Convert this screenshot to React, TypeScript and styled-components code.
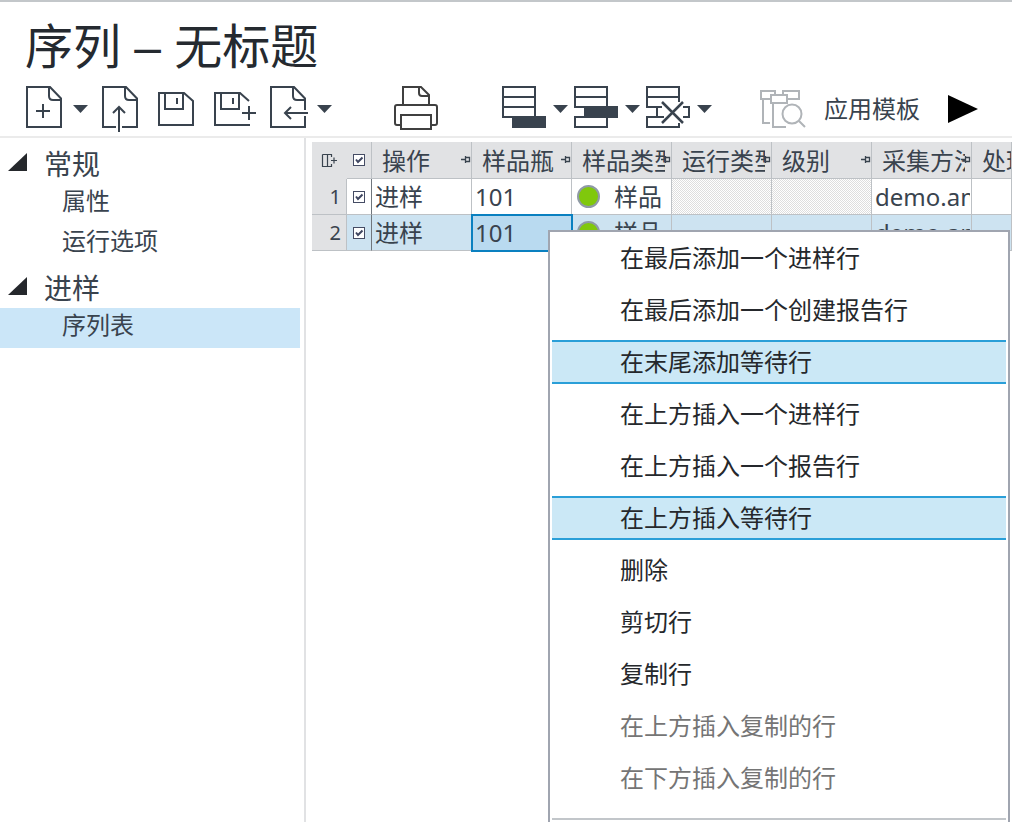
import React from "react";
import styled, { createGlobalStyle, css } from "styled-components";

const ink = "#39434e";
const line = "#bdc1c5";

const GlobalStyle = createGlobalStyle`
  *, *::before, *::after { box-sizing: border-box; }
  body { margin: 0; background: #fff; }
  body, button, input, table {
    font-family: "Noto Sans", "Noto Sans CJK SC", sans-serif;
    font-weight: 400;
    color: ${ink};
  }
`;

const Page = styled.div`
  position: relative;
  display: flex;
  flex-direction: column;
  height: 100vh;
  overflow: hidden;
`;

const Header = styled.header`
  flex: none;
  margin-right: 2px;
  padding: 12px 24px 4px 25px;
  border-top: 2px solid #c3c7ca;
  border-bottom: 2px solid #ebebeb;
`;

const Title = styled.h1`
  margin: 0 0 4px;
  font-family: "Liberation Sans", "Noto Sans CJK SC", sans-serif;
  font-size: 48px;
  line-height: 68px;
  font-weight: 400;
  color: #252a30;
  white-space: nowrap;
`;

const Toolbar = styled.div`
  display: flex;
  align-items: center;
  height: 46px;
`;

const Group = styled.div<{ $gap: number; $lead: number }>`
  display: flex;
  flex: none;
  align-items: center;
  gap: ${(p) => p.$gap}px;
  margin-left: ${(p) => p.$lead}px;
`;

const Split = styled.div<{ $gap: number }>`
  display: flex;
  align-items: center;
  gap: ${(p) => p.$gap}px;
`;

const ToolButton = styled.button<{ $pad?: number; $gap?: number }>`
  display: flex;
  align-items: center;
  gap: ${(p) => p.$gap ?? 0}px;
  padding: 0 ${(p) => p.$pad ?? 0}px;
  border: 0;
  background: none;
  color: ${ink};
  font-size: 24px;
  line-height: 36px;
  white-space: nowrap;
`;

const Drawing = styled.svg`
  display: block;
  flex: none;
  overflow: visible;
  fill: none;
  stroke: currentColor;
  stroke-width: 2;
`;

const Body = styled.div`
  display: flex;
  flex: 1;
  min-height: 0;
`;

const Sidebar = styled.nav`
  flex: none;
  display: flex;
  flex-direction: column;
  gap: 4px;
  width: 306px;
  padding: 6px 4px 0 0;
  border-right: 2px solid #e1e2e4;
`;

const GroupButton = styled.button`
  display: flex;
  align-items: center;
  gap: 17px;
  width: 100%;
  height: 40px;
  padding: 0 8px;
  border: 0;
  background: none;
  font-size: 28px;
  line-height: 40px;
`;

const SubList = styled.ul`
  margin: 0;
  padding: 0;
  list-style: none;
`;

const SubLink = styled.a<{ $active?: boolean }>`
  display: block;
  height: 40px;
  padding-left: 62px;
  font-size: 24px;
  line-height: 34px;
  color: ${ink};
  text-decoration: none;
  background: ${(p) => (p.$active ? "#cbe6f8" : "transparent")};
`;

const Main = styled.main`
  flex: 1;
  min-width: 0;
  padding: 4px 2px 0 6px;
`;

const Grid = styled.table`
  width: 100%;
  table-layout: fixed;
  border-collapse: separate;
  border-spacing: 0;
  font-size: 24px;
  line-height: 35px;
`;

const Col = styled.col<{ $w?: number }>`
  width: ${(p) => (p.$w ? `${p.$w}px` : "auto")};
`;

const HeadRow = styled.tr`
  height: 37px;
  background: #e1e2e4;
`;

const HeadCell = styled.th<{ $corner?: boolean }>`
  padding: 0;
  overflow: hidden;
  font-weight: 400;
  text-align: left;
  white-space: nowrap;
  border-right: ${(p) => (p.$corner ? "0" : `1px solid ${line}`)};
  border-bottom: ${(p) => (p.$corner ? "0" : `1px solid ${line}`)};
`;

const HeadInner = styled.div`
  display: flex;
  align-items: center;
  padding-left: 10px;
`;

const HeadText = styled.span`
  flex: 1;
  min-width: 0;
  margin-right: -4px;
  overflow: hidden;
`;

const Centered = styled.div`
  display: flex;
  align-items: center;
  justify-content: center;
`;

const BodyRow = styled.tr<{ $active?: boolean }>`
  height: 36px;
  background: ${(p) => (p.$active ? "#cde3f1" : "#fff")};
`;

const Cell = styled.td<{ $hatched?: boolean; $selected?: boolean; $divider?: boolean }>`
  padding: ${(p) => (p.$divider ? "0" : "0 1px 0 3px")};
  overflow: hidden;
  white-space: nowrap;
  border-right: 1px solid ${(p) => (p.$divider ? "#6f767d" : line)};
  border-bottom: 1px solid ${line};
  ${(p) =>
    p.$hatched &&
    css`
      background: repeating-conic-gradient(#dedede 0 25%, #fff 0 50%) 0 0 / 2px 2px;
    `}
  ${(p) =>
    p.$selected &&
    css`
      background: #b9daf0;
      outline: 2px solid #0a80c0;
      outline-offset: -1px;
    `}
`;

const Clip = styled.div`
  overflow: hidden;
`;

const RowNumber = styled.th`
  padding: 0 5px 0 0;
  font-size: 20px;
  font-weight: 400;
  text-align: right;
  background: #e1e2e4;
  border-right: 1px solid ${line};
  border-bottom: 1px solid ${line};
`;

const TypeLabel = styled.div`
  display: flex;
  align-items: center;
  gap: 14px;
  padding-left: 2px;
`;

const Dot = styled.span`
  flex: none;
  width: 23px;
  height: 23px;
  border: 2px solid #8f9aa6;
  border-radius: 50%;
  background: #80c80c;
`;

const TickLabel = styled.label`
  display: grid;
  width: 12px;
  height: 12px;
  margin: 0 auto;
  & > * { grid-area: 1 / 1; }
`;

const TickInput = styled.input`
  appearance: none;
  width: 12px;
  height: 12px;
  margin: 0;
  border: 1px solid #454c64;
  background: #fff;
  &:not(:checked) + svg { display: none; }
`;

const Menu = styled.div`
  position: absolute;
  z-index: 2;
  top: 230px;
  left: 548px;
  right: 4px;
  bottom: -2px;
  display: flex;
  flex-direction: column;
  gap: 8px;
  padding: 4px 2px 0;
  border: 2px solid #a0a5b0;
  background: #fff;
`;

const MenuItem = styled.button<{ $lit?: boolean }>`
  flex: none;
  height: 44px;
  padding: 0 0 0 68px;
  border: solid ${(p) => (p.$lit ? "#2a9fd8" : "transparent")};
  border-width: 2px 0;
  background: ${(p) => (p.$lit ? "#cbe8f6" : "none")};
  color: #25282c;
  font-size: 24px;
  line-height: 40px;
  text-align: left;
  white-space: nowrap;
  &:disabled { color: #757575; }
`;

const MenuRule = styled.hr`
  flex: none;
  width: 100%;
  height: 2px;
  margin: 10px 0 0;
  border: 0;
  background: #c2c6ca;
`;

const Caret = ({ label }: { label: string }) => (
  <ToolButton aria-label={label}>
    <Drawing width="15" height="8" viewBox="0 0 15 8">
      <path d="M0 0H15L7.5 8Z" fill="currentColor" stroke="none" />
    </Drawing>
  </ToolButton>
);

const fold = "M23 1V10Q23 14 27 14H35";

const NewIcon = () => (
  <Drawing width="36" height="46" viewBox="0 0 36 46">
    <path d={`M1 1H24L35 12.5V41H1Z ${fold} M17 18V32M10 25H24`} />
  </Drawing>
);

const OpenIcon = () => (
  <Drawing width="36" height="46" viewBox="0 0 36 46">
    <path d={`M14 41H1V1H24L35 12.5V41H20 ${fold} M17 46V21M11 27L17 21L23 27`} />
  </Drawing>
);

const SaveIcon = () => (
  <Drawing width="36" height="34" viewBox="0 0 36 34">
    <path d="M1 1H26L35 9V33H1ZM7 1V17H25V1M19 6V12" />
  </Drawing>
);

const SaveAsIcon = () => (
  <Drawing width="42" height="34" viewBox="0 0 42 34">
    <path d="M35 9L26 1H1V33H36M7 1V17H25V1M19 6V12M35 14V28M28 21H42" />
  </Drawing>
);

const ImportIcon = () => (
  <Drawing width="36" height="46" viewBox="0 0 36 46">
    <path d={`M35 24V12.5L24 1H1V41H35V30 ${fold} M38 27H15M21 21L15 27L21 33`} />
  </Drawing>
);

const PrintIcon = () => (
  <Drawing width="44" height="46" viewBox="0 0 44 46" color="#404040">
    <path d="M9 18V1H27L35 9V18M25 1V7Q25 10 28 10H35M7 39H3Q1 39 1 37V21Q1 19 3 19H41Q43 19 43 21V37Q43 39 41 39H37M7 29H37V43H7Z" />
  </Drawing>
);

const AppendRowIcon = () => (
  <Drawing width="44" height="46" viewBox="0 0 44 46">
    <path d="M1 1H33V31H1ZM1 11H33M1 21H33" />
    <rect x="10" y="30" width="34" height="12" fill="currentColor" stroke="none" />
  </Drawing>
);

const InsertRowIcon = () => (
  <Drawing width="44" height="46" viewBox="0 0 44 46">
    <path d="M1 1H33V21H1ZM1 11H33M1 31H33V41H1Z" />
    <rect x="10" y="20" width="34" height="12" fill="currentColor" stroke="none" />
  </Drawing>
);

const DeleteRowIcon = () => (
  <Drawing width="44" height="46" viewBox="0 0 44 46">
    <path d="M33 16V1H1V21H16M1 11H33M11 21V31M18 31H1V41H33V37M37 21H43V31H37" />
    <path d="M16 16L37 37M37 16L16 37" strokeWidth="2.5" />
  </Drawing>
);

const TemplateIcon = () => (
  <Drawing width="46" height="38" viewBox="0 0 46 38" color="#b0b4b8">
    <path d="M11 9H1V1H15V5M23 5V1H39V9H27M11 5H27V13H11ZM3 9V33H10M13 13V37H26M39 31L45 37" />
    <circle cx="32" cy="24" r="9.5" />
  </Drawing>
);

const PlayIcon = () => (
  <Drawing width="30" height="28" viewBox="0 0 30 28" color="#000">
    <path d="M0 0L30 14L0 28Z" fill="currentColor" stroke="none" />
  </Drawing>
);

const TriangleIcon = () => (
  <Drawing width="19" height="22" viewBox="0 0 19 22" color="#25282c">
    <path d="M19 0V18H0Z" fill="currentColor" stroke="none" />
  </Drawing>
);

const PinIcon = () => (
  <Drawing width="10" height="8" viewBox="0 0 10 8">
    <path d="M0 3.5H4M4.5 0V7M4 1.5H8.5V5.5H4" strokeWidth="1.3" />
  </Drawing>
);

const ColumnsIcon = () => (
  <Drawing width="15" height="13" viewBox="0 0 15 13">
    <path d="M.5 .5H9.5V3M9.5 10V12.5H.5V.5M5.5 .5V12.5M9 6.5H15M12 3.5V9.5" strokeWidth="1.2" />
  </Drawing>
);

const Tick = ({ label }: { label: string }) => (
  <TickLabel>
    <TickInput type="checkbox" defaultChecked aria-label={label} />
    <Drawing width="12" height="12" viewBox="0 0 12 12" color="#3f4660" pointerEvents="none">
      <path d="M3 5.5L5 8L9.5 3.5" />
    </Drawing>
  </TickLabel>
);

const columns = ["操作", "样品瓶", "样品类型", "运行类型", "级别", "采集方法"];
const rows = [
  { id: 1, active: false },
  { id: 2, active: true },
];

const menu = [
  { text: "在最后添加一个进样行" },
  { text: "在最后添加一个创建报告行" },
  { text: "在末尾添加等待行", lit: true },
  { text: "在上方插入一个进样行" },
  { text: "在上方插入一个报告行" },
  { text: "在上方插入等待行", lit: true },
  { text: "删除" },
  { text: "剪切行" },
  { text: "复制行" },
  { text: "在上方插入复制的行", off: true },
  { text: "在下方插入复制的行", off: true },
];

const sections = [
  { name: "常规", items: ["属性", "运行选项"] },
  { name: "进样", items: ["序列表"] },
];

export default function App() {
  return (
    <Page>
      <GlobalStyle />
      <Header>
        <Title>序列 – 无标题</Title>
        <Toolbar role="toolbar">
          <Group $gap={14} $lead={1}>
            <Split $gap={11}>
              <ToolButton aria-label="新建"><NewIcon /></ToolButton>
              <Caret label="新建选项" />
            </Split>
            <ToolButton aria-label="打开"><OpenIcon /></ToolButton>
            <ToolButton aria-label="保存" $pad={6}><SaveIcon /></ToolButton>
            <ToolButton aria-label="另存为"><SaveAsIcon /></ToolButton>
            <Split $gap={11}>
              <ToolButton aria-label="导入"><ImportIcon /></ToolButton>
              <Caret label="导入选项" />
            </Split>
          </Group>
          <Group $gap={0} $lead={62}>
            <ToolButton aria-label="打印"><PrintIcon /></ToolButton>
          </Group>
          <Group $gap={6} $lead={64}>
            <Split $gap={7}>
              <ToolButton aria-label="添加行"><AppendRowIcon /></ToolButton>
              <Caret label="添加行选项" />
            </Split>
            <Split $gap={7}>
              <ToolButton aria-label="插入行"><InsertRowIcon /></ToolButton>
              <Caret label="插入行选项" />
            </Split>
            <Split $gap={7}>
              <ToolButton aria-label="删除行"><DeleteRowIcon /></ToolButton>
              <Caret label="删除行选项" />
            </Split>
          </Group>
          <Group $gap={28} $lead={48}>
            <ToolButton $gap={18}><TemplateIcon />应用模板</ToolButton>
            <ToolButton aria-label="运行"><PlayIcon /></ToolButton>
          </Group>
        </Toolbar>
      </Header>
      <Body>
        <Sidebar>
          {sections.map((s) => (
            <div key={s.name}>
              <GroupButton aria-expanded="true">
                <TriangleIcon />
                {s.name}
              </GroupButton>
              <SubList>
                {s.items.map((i) => (
                  <li key={i}>
                    <SubLink href="#" $active={i === "序列表"}>{i}</SubLink>
                  </li>
                ))}
              </SubList>
            </div>
          ))}
        </Sidebar>
        <Main>
          <Grid>
            <colgroup>
              <Col $w={35} />
              <Col $w={25} />
              {columns.map((c) => (
                <Col key={c} $w={100} />
              ))}
              <Col />
            </colgroup>
            <thead>
              <HeadRow>
                <HeadCell $corner>
                  <Centered><ColumnsIcon /></Centered>
                </HeadCell>
                <HeadCell><Tick label="全选" /></HeadCell>
                {columns.map((c) => (
                  <HeadCell key={c}>
                    <HeadInner>
                      <HeadText>{c}</HeadText>
                      <PinIcon />
                    </HeadInner>
                  </HeadCell>
                ))}
                <HeadCell>
                  <HeadInner><HeadText>处理方法</HeadText></HeadInner>
                </HeadCell>
              </HeadRow>
            </thead>
            <tbody>
              {rows.map((r) => (
                <BodyRow key={r.id} $active={r.active}>
                  <RowNumber scope="row">{r.id}</RowNumber>
                  <Cell $divider><Tick label={`第 ${r.id} 行`} /></Cell>
                  <Cell>进样</Cell>
                  <Cell $selected={r.active}>101</Cell>
                  <Cell>
                    <TypeLabel><Dot />样品</TypeLabel>
                  </Cell>
                  <Cell $hatched={!r.active} />
                  <Cell $hatched={!r.active} />
                  <Cell><Clip>demo.amx</Clip></Cell>
                  <Cell />
                </BodyRow>
              ))}
            </tbody>
          </Grid>
        </Main>
      </Body>
      <Menu role="menu">
        {menu.map((m) => (
          <MenuItem key={m.text} role="menuitem" $lit={m.lit} disabled={m.off}>
            {m.text}
          </MenuItem>
        ))}
        <MenuRule />
      </Menu>
    </Page>
  );
}
